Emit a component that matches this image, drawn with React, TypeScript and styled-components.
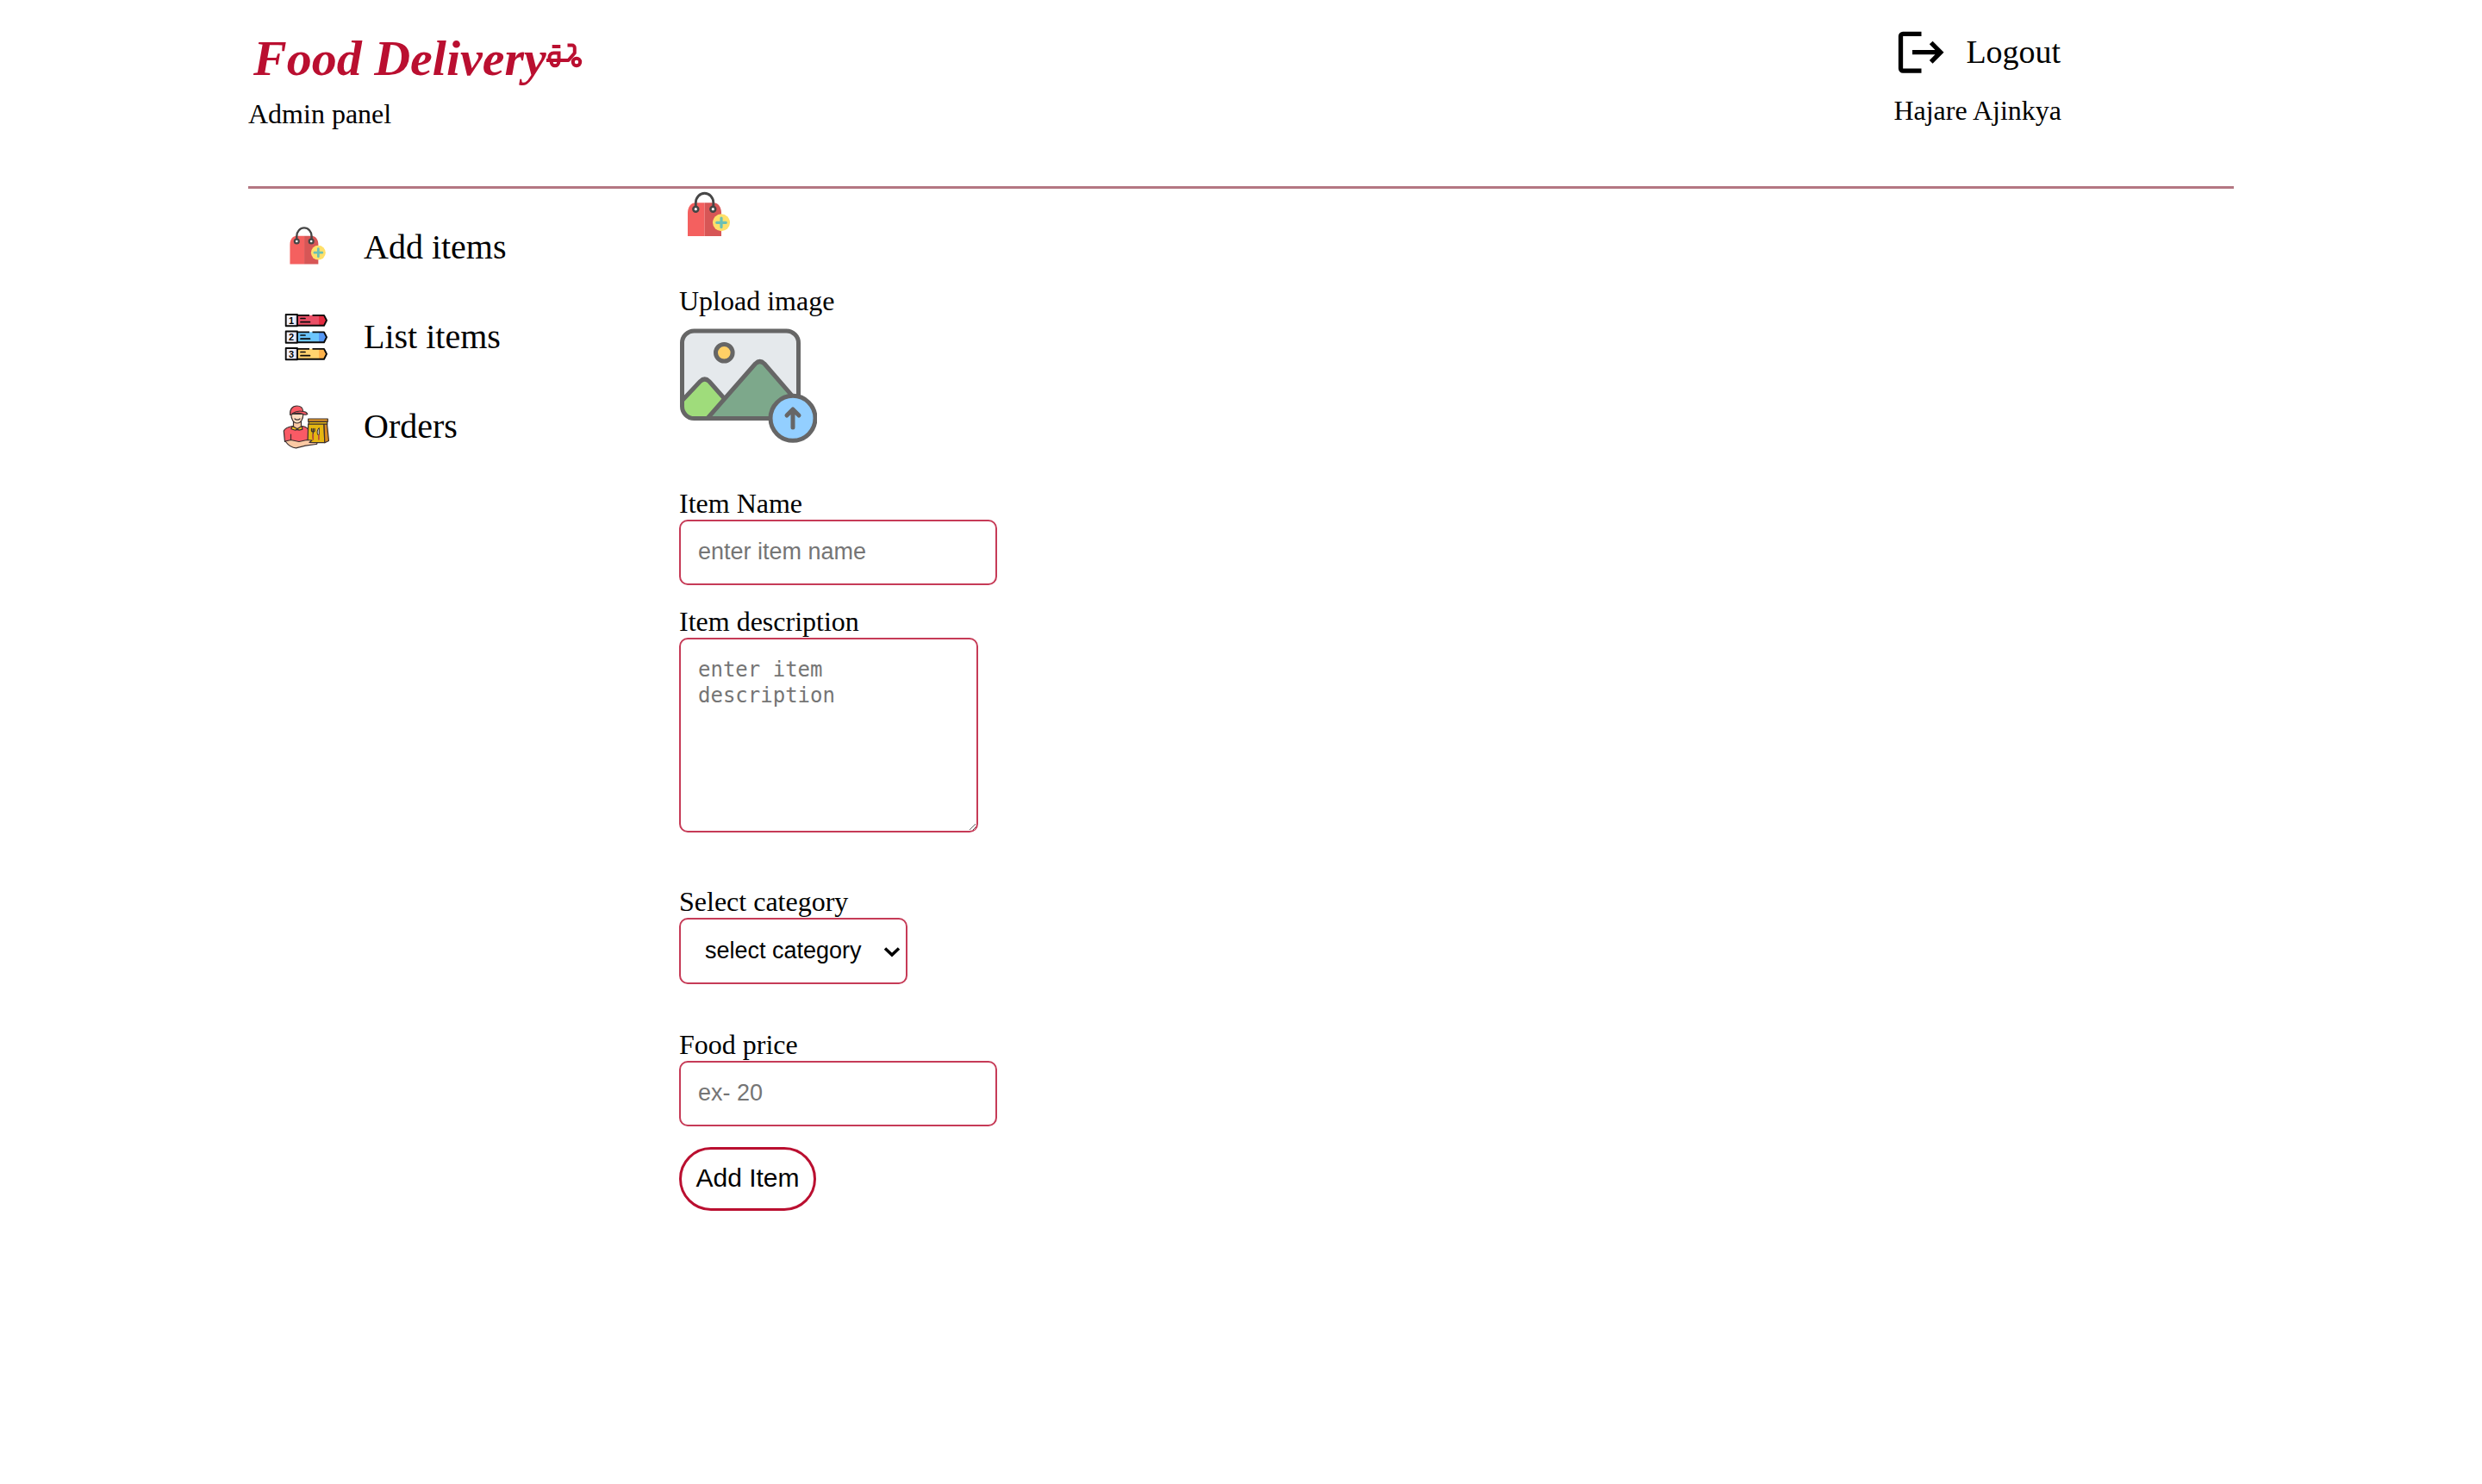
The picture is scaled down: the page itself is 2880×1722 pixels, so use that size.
import React from "react";
import styled, { createGlobalStyle } from "styled-components";

const crimson = "#ba0f30";
const border = "#c63b57";
const serif = '"Liberation Serif", "Times New Roman", serif';
const sans = '"Liberation Sans", Arial, sans-serif';

const GlobalStyle = createGlobalStyle`
  * {
    box-sizing: border-box;
  }
  body {
    margin: 0;
    background: #fff;
    color: #000;
    font-family: ${serif};
    font-size: 32px;
    line-height: 37px;
  }
`;

const Page = styled.div`
  margin: 0 10%;
`;

const Header = styled.header`
  display: flex;
  justify-content: space-between;
  padding: 28px 200px 65px 0;
  border-bottom: 3px solid #b47782;
`;

const Brand = styled.div`
  display: flex;
  flex-direction: column;
  gap: 6px;
`;

const Logo = styled.a`
  display: flex;
  align-items: center;
  padding-left: 6px;
  color: ${crimson};
  font-size: 58px;
  font-style: italic;
  font-weight: 700;
  line-height: 80px;
  text-decoration: none;
  > svg {
    margin-bottom: 6px;
  }
`;

const Account = styled.div`
  display: flex;
  flex-direction: column;
  gap: 18px;
`;

const LogoutButton = styled.button`
  display: flex;
  align-items: center;
  gap: 20px;
  padding: 0;
  border: 0;
  background: none;
  color: inherit;
  font-family: ${serif};
  font-size: 38px;
  line-height: 44px;
  cursor: pointer;
`;

const Columns = styled.div`
  display: flex;
`;

const Sidebar = styled.nav`
  display: flex;
  flex: 0 0 500px;
  flex-direction: column;
  gap: 40px;
  padding: 36px 0 0 40px;
`;

const NavLink = styled.a`
  display: flex;
  align-items: center;
  gap: 40px;
  height: 64px;
  color: inherit;
  font-size: 40px;
  line-height: 46px;
  text-decoration: none;
`;

const Form = styled.form`
  display: flex;
  flex: 1;
  flex-direction: column;
  align-items: flex-start;
`;

const FormIcon = styled.div`
  display: flex;
  margin-bottom: 48px;
`;

const Field = styled.div<{ $after: number }>`
  display: flex;
  flex-direction: column;
  align-items: flex-start;
  margin-bottom: ${(p) => p.$after}px;
`;

const UploadLabel = styled.label`
  display: flex;
  flex-direction: column;
  cursor: pointer;
`;

const TextInput = styled.input`
  width: 369px;
  height: 76px;
  padding: 0 20px 2px;
  border: 2px solid ${border};
  border-radius: 10px;
  background: #fff;
  font-family: ${sans};
  font-size: 27px;
  &::placeholder {
    color: #757575;
  }
`;

const TextArea = styled.textarea`
  display: block;
  width: 347px;
  height: 226px;
  padding: 20px;
  border: 2px solid ${border};
  border-radius: 10px;
  background: #fff;
  font-family: "DejaVu Sans Mono", monospace;
  font-size: 24px;
  line-height: 30px;
  &::placeholder {
    color: #757575;
  }
`;

const SelectBox = styled.div`
  display: grid;
  grid-template-columns: 265px;
  align-items: center;
  > * {
    grid-area: 1 / 1;
  }
  > svg {
    justify-self: end;
    margin-right: 8px;
    pointer-events: none;
  }
`;

const Select = styled.select`
  appearance: none;
  width: 100%;
  height: 77px;
  padding: 0 28px 2px;
  border: 2px solid ${border};
  border-radius: 10px;
  background: #fff;
  color: #000;
  font-family: ${sans};
  font-size: 27px;
`;

const SubmitButton = styled.button`
  width: 159px;
  height: 74px;
  padding: 0 0 2px;
  border: 3px solid ${crimson};
  border-radius: 37px;
  background: #fff;
  color: #000;
  font-family: ${sans};
  font-size: 30px;
  cursor: pointer;
`;

const ScooterIcon = () => (
  <svg width="42" height="30" viewBox="0 0 42 30" fill="none" stroke={crimson} strokeWidth="4" aria-hidden="true">
    <path d="M6.700 4h9.600" />
    <path d="M3.500 20v-3c0-3.500 2-5.500 5-5.500h6V20" />
    <path d="M0 20h25.500l7.300-8.500V5.500a3 3 0 0 0-3-3H24.500" strokeLinejoin="round" />
    <path d="M5.700 20.500v1.500a4.300 4.300 0 0 0 8.600 0v-1.500" />
    <circle cx="35" cy="22" r="4.200" />
  </svg>
);

const LogoutIcon = () => (
  <svg width="64" height="64" viewBox="0 0 64 64" fill="none" stroke="#000" strokeWidth="5.300" aria-hidden="true">
    <path d="M32.500 11.300H11a2.500 2.500 0 0 0-2.500 2.500v37.800a2.500 2.500 0 0 0 2.500 2.500h21.500" />
    <path d="M22 32.700H55.500M43.700 21.500l11.100 11.200-11.100 11.200" />
  </svg>
);

const BagIcon = ({ size }: { size: number }) => (
  <svg width={size} height={size} viewBox="0 0 64 64" aria-hidden="true">
    <path d="M10 55V28c0-7 4-11.700 9-11.700h10.700V55z" fill="#f4605f" />
    <path d="M29.700 16.300H40c5 0 9 4.700 9 11.700v27H29.700z" fill="#d75656" />
    <circle cx="19.300" cy="23.700" r="4.200" fill="#464646" />
    <circle cx="39.300" cy="23.700" r="4.200" fill="#464646" />
    <path d="M19.300 22v-5.500a10 11 0 0 1 20.500 0V22" fill="none" stroke="#464646" strokeWidth="2.800" />
    <circle cx="19.300" cy="23.700" r="1.600" fill="#fff" />
    <circle cx="39.300" cy="23.700" r="1.600" fill="#fff" />
    <circle cx="49" cy="39.300" r="10" fill="#ffe06a" />
    <path d="M49 34v10.600M43.700 39.300h10.600" stroke="#6cc0b5" strokeWidth="3.200" strokeLinecap="round" />
  </svg>
);

const ribbons = [
  { y: 1, fill: "#ea4f66", tip: "#e32b40" },
  { y: 20.500, fill: "#6cc5fb", tip: "#5697f3" },
  { y: 40, fill: "#ffd36f", tip: "#fdb24b" },
];

const ListIcon = () => (
  <svg width="54" height="54" viewBox="0 0 54 54" overflow="visible" aria-hidden="true">
    {ribbons.map((r, i) => (
      <g key={r.y} transform={`translate(0 ${r.y})`}>
        <path d="M17 0.700H48l3 6L48 12.700H17z" fill={r.fill} />
        <path d="M42 0.700h6l3 6L48 12.700h-6z" fill={r.tip} />
        <rect x="3.700" y="0" width="13.300" height="13.300" fill="#f4f3fb" />
        <path d="M14 0h3v13.300h-3z" fill="#d9d8ea" />
        <path
          d="M31 0.900H17M34.500 0.900H48l3 5.900-3 5.900H17M3.700 0H17v13.300H3.700z"
          fill="none"
          stroke="#0a0a0a"
          strokeWidth="1.900"
          strokeLinejoin="round"
        />
        <path d="M21 4.500h5M21 8.700h10.500" stroke="#0a0a0a" strokeWidth="1.700" strokeLinecap="round" />
        <text x="10" y="10.500" textAnchor="middle" fontFamily={sans} fontWeight="700" fontSize="11">
          {i + 1}
        </text>
      </g>
    ))}
  </svg>
);

const CourierIcon = () => (
  <svg
    width="54"
    height="54"
    viewBox="0 0 54 54"
    stroke="#3a3030"
    strokeWidth="1.200"
    strokeLinejoin="round"
    strokeLinecap="round"
    aria-hidden="true"
  >
    <path d="M12.500 21v6l4.500 5 4.500-5v-6z" fill="#fbc9a4" />
    <path d="M9.800 12.500c0 6 2.700 10.500 7 10.500s7-4.500 7-10.500z" fill="#fddcc0" />
    <path d="M14 18c1.500 1.500 4.500 1.500 6 0" fill="none" />
    <path d="M8.700 13.500C8 7 11 3 16.500 3c4.500 0 7 3 7.300 6.500 2 0 4 1 5 3-2 1-4.500 1-6.500-.5-4-1-9-.5-13.600 1.500z" fill="#fa5a65" />
    <path d="M23.800 9.500c-4-1-9 0-12.500 2.200" fill="none" />
    <path d="M1.300 32c1-2.500 5-4.500 10-5.500l5.700 4.500 6-4.500c4 .7 6.500 2.500 7 5l.5 14H9.500v-2.500l-7 1.500z" fill="#fa5a65" />
    <path d="M11.300 26.500l-1.500 3.200 5 1.500 2-1.700 2.200 1.700 4-1-.8-3.700-5.200 3z" fill="#f3c61d" />
    <path d="M9.500 36v7" fill="none" />
    <path d="M29.700 24h18.300l.8 21.700H29z" fill="#e5b611" />
    <path d="M48 24h3.500l2 19.500-4.700 2.200z" fill="#d98a22" />
    <path d="M29.700 18h22.600v3.300H29.700z" fill="#e99a27" />
    <path d="M30.500 21.300h21l.3 2.700H30z" fill="#e5b611" />
    <path d="M33.500 29.500v2.500c0 1.500 3.600 1.500 3.600 0v-2.500M35.300 29.500V40" fill="none" strokeWidth="1.300" />
    <path d="M42.300 36V28.500c-2.300 2-2.600 5-1.800 7.500z" fill="#ddd" strokeWidth="1" />
    <path d="M35.300 36v6M41.900 37v5" stroke="#b8463e" strokeWidth="1.600" />
    <path d="M3 44l6.500-1.500 9.500 2 9-2 6 .5-3 2.500 8.500.2c1 1.300 0 1.800-1 1.800l-12 1.700-11 2.600c-5 0-9.500-3.800-12.500-7.800z" fill="#fbc9a4" />
  </svg>
);

const UploadIcon = () => (
  <svg
    width="160"
    height="160"
    viewBox="0 0 160 160"
    stroke="#666"
    strokeWidth="5"
    strokeLinecap="round"
    strokeLinejoin="round"
    aria-hidden="true"
  >
    <defs>
      <clipPath id="frame">
        <rect x="3.500" y="16" width="135" height="101.500" rx="14" />
      </clipPath>
    </defs>
    <g clipPath="url(#frame)">
      <rect x="3.500" y="16" width="135" height="101.500" fill="#e5e9ec" stroke="none" />
      <path d="M-6 107L24.500 74.500q5.200-5 10.400 0L60 103v20H-6z" fill="#9fdc7b" />
      <path d="M32 118.500L88.500 54q5.200-5 10.400 0L150 113v12H32z" fill="#7da88b" />
    </g>
    <rect x="3.500" y="16" width="135" height="101.500" rx="14" fill="none" />
    <circle cx="52.300" cy="41.300" r="9.800" fill="#ffd066" />
    <circle cx="132" cy="117.300" r="26" fill="#93cfff" />
    <path d="M132 128v-21M125 114l7-7 7 7" fill="none" />
  </svg>
);

const ChevronIcon = () => (
  <svg width="20" height="14" viewBox="0 0 20 14" fill="none" stroke="#000" strokeWidth="3.500" aria-hidden="true">
    <path d="M2 3.500l8 7.500 8-7.500" />
  </svg>
);

export default function App() {
  return (
    <>
      <GlobalStyle />
      <Page>
        <Header>
          <Brand>
            <Logo href="#home">
              Food Delivery
              <ScooterIcon />
            </Logo>
            <span>Admin panel</span>
          </Brand>
          <Account>
            <LogoutButton type="button">
              <LogoutIcon />
              Logout
            </LogoutButton>
            <span>Hajare Ajinkya</span>
          </Account>
        </Header>
        <Columns>
          <Sidebar>
            <NavLink href="#add">
              <BagIcon size={54} />
              Add items
            </NavLink>
            <NavLink href="#list">
              <ListIcon />
              List items
            </NavLink>
            <NavLink href="#orders">
              <CourierIcon />
              Orders
            </NavLink>
          </Sidebar>
          <Form onSubmit={(e) => e.preventDefault()}>
            <FormIcon>
              <BagIcon size={64} />
            </FormIcon>
            <Field $after={38}>
              <UploadLabel htmlFor="image">
                Upload image
                <UploadIcon />
              </UploadLabel>
              <input id="image" type="file" accept="image/*" hidden />
            </Field>
            <Field $after={24}>
              <label htmlFor="name">Item Name</label>
              <TextInput id="name" type="text" placeholder="enter item name" />
            </Field>
            <Field $after={62}>
              <label htmlFor="description">Item description</label>
              <TextArea id="description" placeholder="enter item description" />
            </Field>
            <Field $after={52}>
              <label htmlFor="category">Select category</label>
              <SelectBox>
                <Select id="category" defaultValue="">
                  <option value="">select category</option>
                </Select>
                <ChevronIcon />
              </SelectBox>
            </Field>
            <Field $after={24}>
              <label htmlFor="price">Food price</label>
              <TextInput id="price" type="text" inputMode="numeric" placeholder="ex- 20" />
            </Field>
            <SubmitButton type="submit">Add Item</SubmitButton>
          </Form>
        </Columns>
      </Page>
    </>
  );
}
